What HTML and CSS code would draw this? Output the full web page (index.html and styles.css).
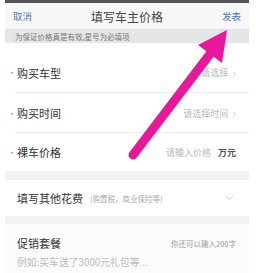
FILE: index.html
```html
<!DOCTYPE html>
<html lang="zh">
<head>
<meta charset="utf-8">
<link rel="stylesheet" href="styles.css">
</head>
<body>
<div class="screen">
  <div class="statusbar"></div>
  <div class="header">
    <span class="link">取消</span>
    <span class="title">填写车主价格</span>
    <span class="link">发表</span>
  </div>
  <div class="notice">为保证价格真是有效,星号为必填项</div>
  <div class="form">
    <div class="row r1">
      <span class="req">•</span><span class="label">购买车型</span>
      <span class="value">请选择<span class="chev">›</span></span>
    </div>
    <div class="row r2">
      <span class="req">•</span><span class="label">购买时间</span>
      <span class="value">请选择时间<span class="chev">›</span></span>
    </div>
    <div class="row r3 last">
      <span class="req">•</span><span class="label">裸车价格</span>
      <span class="value">请输入价格<span class="unit">万元</span></span>
    </div>
  </div>
  <div class="band"></div>
  <div class="row r4 last">
    <span class="label">填写其他花费</span><span class="hint">(购置税，商业保险等)</span>
    <span class="value"><svg class="down" width="9" height="6" viewBox="0 0 9 6"><path d="M1 1 L4.5 4.5 L8 1" fill="none" stroke="#cfcfcf" stroke-width="1"/></svg></span>
  </div>
  <div class="band b2"></div>
  <div class="promo">
    <div class="promo-head">
      <span class="label">促销套餐</span>
      <span class="count">你还可以输入200字</span>
    </div>
    <div class="placeholder">例如:买车送了3000元礼包等...</div>
  </div>
</div>
<svg class="arrow" width="256" height="273" viewBox="0 0 256 273">
  <line x1="133" y1="155" x2="210" y2="54" stroke="#e8179c" stroke-width="9" stroke-linecap="round"/>
  <polygon points="227,30 198,45 222,63" fill="#e8179c"/>
</svg>
</body>
</html>
```

FILE: styles.css
```css
html, body {
  margin: 0;
  padding: 0;
  background: #ffffff;
}
body {
  width: 256px;
  height: 273px;
  overflow: hidden;
  position: relative;
  font-family: "Noto Sans CJK SC", "Noto Sans", sans-serif;
}
.screen {
  margin: 0 7px 0 5px;
  height: 273px;
  background: #fcfcfc;
  overflow: hidden;
}
.statusbar {
  height: 3px;
  background: #555555;
}
.header {
  height: 26px;
  background: #f7f7f7;
  border-bottom: 1px solid #e2e2e2;
  display: flex;
  align-items: center;
  justify-content: space-between;
  padding: 0 8px;
}
.link {
  font-size: 9.5px;
  color: #4a7fc1;
}
.title {
  font-size: 12px;
  color: #444444;
}
.notice {
  height: 13px;
  background: #e6e6e6;
  font-size: 7.5px;
  line-height: 13px;
  color: #777777;
  padding-left: 10px;
}
.form {
  background: #ffffff;
  padding-top: 9px;
}
.row {
  display: flex;
  align-items: center;
  background: #ffffff;
  padding: 0 13px 0 3px;
  position: relative;
}
.row::after {
  content: "";
  position: absolute;
  left: 10px;
  right: 0;
  bottom: 0;
  height: 1px;
  background: #eeeeee;
}
.row.last::after {
  display: none;
}
.r1 { height: 41px; }
.r2 { height: 40px; }
.r3 { height: 38px; }
.r4 { height: 36px; padding-left: 12px; }
.req {
  color: #e06a6a;
  font-size: 8px;
  width: 9px;
}
.label {
  font-size: 11px;
  color: #333333;
}
.hint {
  font-size: 7.5px;
  color: #aaaaaa;
  margin-left: 7px;
}
.value {
  margin-left: auto;
  font-size: 9px;
  color: #b8b8b8;
  display: flex;
  align-items: center;
}
.chev {
  font-size: 12px;
  color: #cccccc;
  margin-left: 4px;
  line-height: 1;
}
.unit {
  color: #555555;
  font-weight: bold;
  margin-left: 7px;
}
.down {
  margin-right: 2px;
}
.band {
  height: 9px;
  background: #f2f2f2;
}
.b2 {
  height: 8px;
}
.promo {
  background: #fcfcfc;
  padding: 11px 13px 0 12px;
}
.promo-head {
  display: flex;
  align-items: center;
  justify-content: space-between;
}
.count {
  font-size: 7.5px;
  color: #9a9a9a;
}
.placeholder {
  margin-top: 4px;
  font-size: 9.8px;
  color: #bbbbbb;
}
.arrow {
  position: absolute;
  left: 0;
  top: 0;
}
```
